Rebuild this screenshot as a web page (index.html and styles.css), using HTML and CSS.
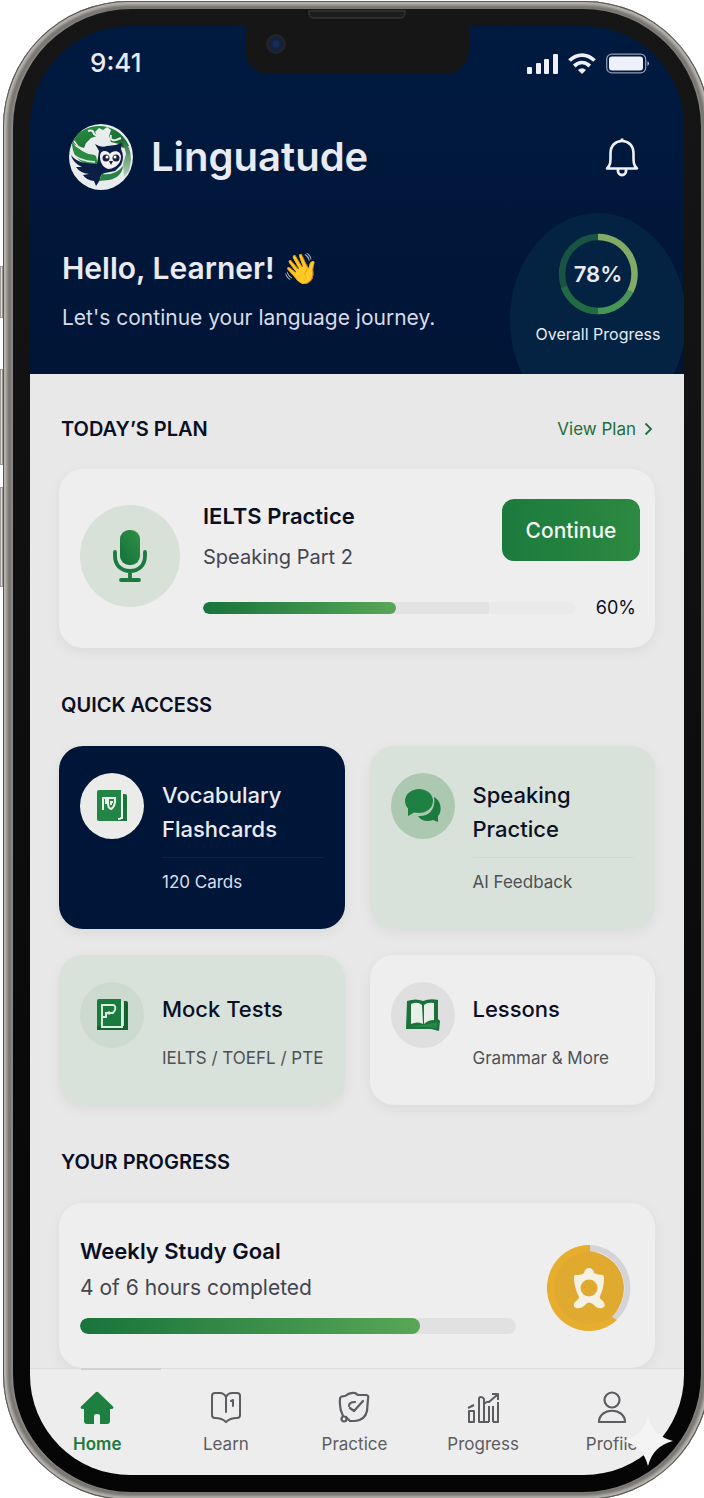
FILE: index.html
```html
<!DOCTYPE html>
<html lang="en">
<head>
  <meta charset="UTF-8" />
  <meta name="viewport" content="width=device-width, initial-scale=1.0"/>
  <title>Linguatude</title>
  <link rel="stylesheet" href="styles.css">
</head>
<body>

  <div class="phone">
    <span class="side-button mute"></span>
    <span class="side-button volume-up"></span>
    <span class="side-button volume-down"></span>
    <div class="bezel">
      <span class="speaker"></span>
      <div class="screen">
        <div class="notch"><span class="camera"></span></div>

        <header class="header">
          <div class="status-bar">
            <span class="time">9:41</span>
            <div class="status-icons">
              <svg width="31" height="21" viewBox="0 0 31 21" fill="#eef0fa">
                <rect x="0" y="14" width="5" height="7" rx="1"/>
                <rect x="9" y="10" width="5" height="11" rx="1"/>
                <rect x="17" y="6" width="5" height="15" rx="1"/>
                <rect x="26" y="1" width="5" height="20" rx="1"/>
              </svg>
              <svg width="28" height="21" viewBox="0 0 28 21" fill="none" stroke="#eef0fa" stroke-width="3.8">
                <path d="M1.5 7.5C9 .2 19 .2 26.5 7.5"/>
                <path d="M6.2 13C11 8.500 17 8.500 21.800 13"/>
                <path d="M14 21L10 17Q14 13.500 18 17Z" fill="#eef0fa" stroke="none"/>
              </svg>
              <svg width="44" height="21" viewBox="0 0 44 21">
                <rect x=".7" y="1.200" width="39" height="18.600" rx="5" fill="none" stroke="#8f9bb5" stroke-width="1.300"/>
                <rect x="3" y="3.500" width="34" height="14" rx="3" fill="#eef0fa"/>
                <path d="M41.500 8q3 2.500 0 5z" fill="#b6bfd2"/>
              </svg>
            </div>
          </div>

          <div class="brand-row">
            <svg class="logo" viewBox="0 0 64 66">
              <defs>
                <linearGradient id="globe" x1="0" y1="0" x2="1" y2="1">
                  <stop offset="0" stop-color="#2c9142"/>
                  <stop offset="1" stop-color="#14602f"/>
                </linearGradient>
                <linearGradient id="rim" x1="0" y1="0" x2="0" y2="1">
                  <stop offset="0" stop-color="#1d6b36"/>
                  <stop offset="1" stop-color="#b9d3bd"/>
                </linearGradient>
                <clipPath id="globeClip"><ellipse cx="32" cy="33" rx="32" ry="33"/></clipPath>
              </defs>
              <g clip-path="url(#globeClip)">
                <rect width="64" height="66" fill="#e9ecec"/>
                <path d="M3 18C12-2 48-6 60 22L54 24 50 20 42 18 40 12 42 6 38 3 34 6 30 4 26 8 28 12 22 14 17 19 15 24 6 21z" fill="url(#globe)"/>
                <path d="M42 11q-2 6 5 5l5-2" fill="none" stroke="#e9ecec" stroke-width="2"/>
                <path d="M19 7q5-2 6 3l5 3" fill="none" stroke="#e9ecec" stroke-width="2"/>
                <path d="M53 14Q62 22 62 36L60 47 55 53 54 40 57 30z" fill="url(#rim)"/>
                <path d="M3 18C9 28 19 26 27 32L29 40C14 42 3 35 3 18z" fill="#2b8c41"/>
                <path d="M5 17Q12 29 25 30M1 28Q9 37 26 38" stroke="#e9ecec" stroke-width="1.500" fill="none"/>
                <path d="M2 31C9 40 18 39 28 40L30 27 26 20Q32 24 38 22 46 22 53 19L52 25Q56 33 52 41L46 47 36 49Q31 50 31 56L27 62 25 57Q17 56 14 51L20 50Q11 49 7 43L13 43Q4 39 2 31z" fill="#0b1e45"/>
                <path d="M33 50Q46 52 54 42 53 53 40 56L30 57z" fill="#2a8344"/>
                <path d="M31 33c0-9 9-6 10-3 2-4 11-4 11 3 0 9-10 12-12 12-4 0-9-5-9-12z" fill="#f4f2f2"/>
                <circle cx="37" cy="34" r="3.500" fill="#17213f"/><circle cx="47" cy="34" r="3.500" fill="#17213f"/>
                <circle cx="38" cy="33" r="1.500" fill="#fff"/><circle cx="46" cy="33" r="1.500" fill="#fff"/>
                <path d="M40 37h4l-2 4z" fill="#17213f"/>
              </g>
            </svg>
            <h1>Linguatude</h1>
            <button class="bell" aria-label="Notifications">
              <svg width="34" height="40" viewBox="0 0 34 40" fill="none" stroke="#f0f1f8" stroke-width="2.600" stroke-linejoin="round">
                <path d="M2 31.500C6 28 5.500 24 5.500 16.500 5.500 8.500 10.500 4 17 4S28.500 8.500 28.500 16.500C28.500 24 28 28 32 31.500Z"/>
                <path d="M17 4V1.500M13 32v2a4 4 0 0 0 8 0v-2" stroke-width="2.800"/>
              </svg>
            </button>
          </div>

          <div class="hero">
            <div class="greeting">
              <h2>Hello, Learner! <span class="wave">👋</span></h2>
              <p>Let's continue your language journey.</p>
            </div>
            <div class="overall">
              <div class="ring">
                <svg width="80" height="82" viewBox="0 0 80 82" fill="none" stroke-width="6.500">
                  <path d="M40 4A36 37 0 0 0 40 78" stroke="#195344"/>
                  <path d="M6 54A36 37 0 0 0 40 78" stroke="#216a42"/>
                  <path d="M40 78A36 37 0 0 0 73 57" stroke="#489657"/>
                  <path d="M40 4A36 37 0 0 1 72.500 58" stroke="#83ab65"/>
                </svg>
                <strong>78%</strong>
              </div>
              <span>Overall Progress</span>
            </div>
          </div>
        </header>

        <main class="content">
          <div class="section-head first">
            <h3>TODAY’S PLAN</h3>
            <a href="#plan">View Plan
              <svg width="9" height="14" viewBox="0 0 9 14" fill="none" stroke="#1f6e3b" stroke-width="1.800"><path d="M1.500 1.500L7 7l-5.500 5.500"/></svg>
            </a>
          </div>

          <section class="card plan-card" id="plan">
            <div class="plan-icon">
              <svg width="36" height="54" viewBox="0 0 36 54">
                <defs>
                  <linearGradient id="mic" x1="0" y1="1" x2="1" y2="0">
                    <stop offset="0" stop-color="#14703a"/>
                    <stop offset="1" stop-color="#2f9145"/>
                  </linearGradient>
                </defs>
                <rect x="8" y="1" width="20" height="35" rx="9" fill="url(#mic)"/>
                <path d="M3 23v4c0 9 6 15 15 15s15-6 15-15v-4M18 42v9M9 51h18" fill="none" stroke="#1c7a40" stroke-width="3.800" stroke-linecap="round"/>
              </svg>
            </div>
            <div class="plan-body">
              <div class="plan-top">
                <div>
                  <h4>IELTS Practice</h4>
                  <p>Speaking Part 2</p>
                </div>
                <button class="continue">Continue</button>
              </div>
              <div class="plan-progress">
                <div class="bar bar-fade"><div class="bar-fill" style="width: 52%"></div></div>
                <span>60%</span>
              </div>
            </div>
          </section>

          <div class="section-head">
            <h3>QUICK ACCESS</h3>
          </div>

          <div class="grid">
            <a href="#vocabulary" class="card tile navy">
              <span class="tile-icon">
                <svg width="30" height="32" viewBox="0 0 30 32">
                  <path d="M2 0H24V31H2Q0 31 0 29V2Q0 0 2 0z" fill="#238545"/>
                  <path d="M26 4h2q2 0 2 2v25H20V29h6z" fill="#1b743c"/>
                  <path d="M25 3V26Q25 29 21 29" fill="none" stroke="#eef3ee" stroke-width="1.800"/>
                  <path d="M6 20V8H9V14M10 8H18V12Q17 18 14 19 11 18 11 13V8M14 15V12H16" fill="none" stroke="#e9f3e9" stroke-width="2"/>
                </svg>
              </span>
              <span class="tile-text">
                <strong>Vocabulary Flashcards</strong>
                <small class="ruled">120 Cards</small>
              </span>
            </a>

            <a href="#speaking" class="card tile mint">
              <span class="tile-icon">
                <svg width="36" height="34" viewBox="0 0 36 34">
                  <path d="M29 8C37 12 37 23 33 27L33 33 28 31C22 33 16 32 13 27 24 28 31 20 29 8z" fill="#1b7b3f"/>
                  <ellipse cx="14" cy="12" rx="14" ry="12" fill="#1e8143"/>
                  <path d="M3 18L3 27 10 23z" fill="#1e8143"/>
                </svg>
              </span>
              <span class="tile-text">
                <strong>Speaking Practice</strong>
                <small class="ruled">AI Feedback</small>
              </span>
            </a>

            <a href="#tests" class="card tile mint short">
              <span class="tile-icon">
                <svg width="31" height="32" viewBox="0 0 31 32">
                  <path d="M2 0H24V31H2Q0 31 0 29V2Q0 0 2 0z" fill="#1b7a3e"/>
                  <path d="M27 2h2q2 0 2 2v27H0V27H27z" fill="#126332"/>
                  <path d="M25 3V28H5V6H16Q19 6 18 11L16 14H9V18H5" fill="none" stroke="#dceee0" stroke-width="1.900"/>
                  <circle cx="12" cy="14" r="1.700" fill="#dceee0"/>
                </svg>
              </span>
              <span class="tile-text">
                <strong>Mock Tests</strong>
                <small>IELTS / TOEFL / PTE</small>
              </span>
            </a>

            <a href="#lessons" class="card tile plain short">
              <span class="tile-icon">
                <svg width="34" height="33" viewBox="0 0 34 33">
                  <path d="M1 2Q10-1 17 2 24-1 32 1L32 20 34 22 33 32 25 30H0z" fill="#1a7139"/>
                  <path d="M5 5Q12 2 16 6L17 25Q12 22 5 25z" fill="#e8eee8"/>
                  <path d="M28 4Q21 3 18 6L18 25Q22 21 28 21z" fill="#e8eee8"/>
                  <path d="M3 28L17 26 31 23 31 29 18 28z" fill="#24884a"/>
                </svg>
              </span>
              <span class="tile-text">
                <strong>Lessons</strong>
                <small>Grammar &amp; More</small>
              </span>
            </a>
          </div>

          <div class="section-head">
            <h3>YOUR PROGRESS</h3>
          </div>

          <section class="card goal-card">
            <div class="goal-body">
              <h4>Weekly Study Goal</h4>
              <p>4 of 6 hours completed</p>
              <div class="bar bar-thick"><div class="bar-fill" style="width: 78%"></div></div>
            </div>
            <svg class="medal" width="84" height="88" viewBox="0 0 84 88">
              <path d="M43 4A39 40 0 0 1 66 75" fill="none" stroke="#d3d3d8" stroke-width="6"/>
              <path d="M43 1A42 43 0 1 0 70 76L65 73A38 39 0 0 0 43 7z" fill="#e6ad2e"/>
              <ellipse cx="42" cy="44" rx="35" ry="36" fill="#e0aa30"/>
              <path d="M37 29Q38 24 42 24T47 29Q51 31 55 31 57 31 57 34 57 44 53 52 52 55 56 57 60 63 55 64 51 65 48 62 42 55 37 62 34 65 29 64 25 62 28 58 34 54 31 51 27 42 27 33 27 30 31 31 35 31 37 29z" fill="#f5f1e4"/>
              <circle cx="42" cy="44" r="8.500" fill="#e0aa30"/>
            </svg>
          </section>
        </main>

        <nav class="tab-bar">
          <a href="#home" class="tab active">
            <svg width="34" height="34" viewBox="0 0 34 34" fill="#1e8040">
              <path d="M15.500 1.500Q17 0 18.500 1.500L33 15.500Q34.500 18 31 18H30V30Q30 33 27 33H20V25Q20 23 17 23T14 25V33H7Q4 33 4 30V18H3Q-.5 18 1 15.500z"/>
            </svg>
            Home
          </a>
          <a href="#learn" class="tab">
            <svg width="34" height="34" viewBox="0 0 34 34" fill="none" stroke="#5c5c61" stroke-width="2" stroke-linejoin="round" stroke-linecap="round">
              <path d="M17 21V6Q15 2 11 2H6Q3 2 3 5V24Q3 27 6 27 13 27 17 31 21 27 28 27 31 27 31 24V5Q31 2 28 2H23Q19 2 17 6"/>
              <path d="M22 10l2-1v6"/>
            </svg>
            Learn
          </a>
          <a href="#practice" class="tab">
            <svg width="34" height="34" viewBox="0 0 34 34" fill="none" stroke="#5c5c61" stroke-width="2.200" stroke-linejoin="round" stroke-linecap="round">
              <path d="M6 25Q2 17 3 8 3 5 8 5 13 1 18 2L21 4 29 4Q32 4 31 8L30 20Q28 29 18 30H13"/>
              <path d="M18 11Q12 11 12 15M13 17l4 3 9-10"/>
              <circle cx="7" cy="28" r="2.500"/>
              <path d="M9 26l4 4"/>
            </svg>
            Practice
          </a>
          <a href="#progress" class="tab">
            <svg width="34" height="34" viewBox="0 0 34 34" fill="none" stroke="#5c5c61" stroke-width="2" stroke-linejoin="round">
              <path d="M3 20H8V31H3zM13 31V8Q13 6 15 6T18 8V31zM23 15V31M27 31V15M32 11V31H27M13 31H23M2 17L8 14M18 13Q21 10 23 11L31 4M26 3H32V9"/>
            </svg>
            Progress
          </a>
          <a href="#profile" class="tab">
            <svg width="34" height="34" viewBox="0 0 34 34" fill="none" stroke="#5c5c61" stroke-width="2.200" stroke-linejoin="round">
              <circle cx="17" cy="9" r="7.500"/>
              <path d="M4 31C4 16 30 16 30 31z"/>
            </svg>
            Profile
          </a>
        </nav>
      </div>
    </div>
    <svg class="sparkle" width="50" height="50" viewBox="0 0 50 50"><path d="M25 0Q30 20 50 25 30 30 25 50 20 30 0 25 20 20 25 0z" fill="#f4f4f4"/></svg>
  </div>

</body>
</html>
```

FILE: styles.css
```css
* {
  box-sizing: border-box;
}
body {
  margin: 0;
  background: #fff;
  font-family: Inter, 'Liberation Sans', sans-serif;
  color: #0b0f24;
  overflow-x: hidden;
}
h1, h2, h3, h4, p {
  margin: 0;
}
a {
  text-decoration: none;
  color: inherit;
}

/* Phone frame */
.phone {
  position: relative;
  margin: 1px -6px 0 3px;
  padding: 8px 9px 8px 10px;
  border-radius: 126px;
  background: #8d8a85;
  box-shadow: inset 0 0 0 1px #55534f, inset 0 0 3px 4px #bab7b1, inset 0 0 2px 8px #75736f;
}
.bezel {
  position: relative;
  padding: 17px;
  border-radius: 118px;
  background: linear-gradient(#161616, #050505);
}
.speaker {
  position: absolute;
  top: 1px;
  left: 50%;
  width: 98px;
  height: 9px;
  transform: translateX(-50%);
  border: 2px solid #2d2d2d;
  border-radius: 0 0 6px 6px;
  background: #1d1d1d;
}
.side-button {
  position: absolute;
  left: -3px;
  width: 3px;
  border: 1px solid #9a9792;
  background: #e2e0dc;
}
.mute {
  top: 265px;
  height: 52px;
}
.volume-up {
  top: 368px;
  height: 96px;
}
.volume-down {
  top: 486px;
  height: 100px;
}
.screen {
  position: relative;
  overflow: hidden;
  border-radius: 100px;
}
.notch {
  position: absolute;
  top: 0;
  left: 50%;
  width: 224px;
  height: 48px;
  transform: translateX(-50%);
  border-radius: 0 0 24px 24px;
  background: #161616;
}
.camera {
  position: absolute;
  top: 8px;
  left: 21px;
  width: 20px;
  height: 20px;
  border-radius: 50%;
  background: radial-gradient(circle, #182d59 15%, #14203b 35%, #20242c 60%);
}

/* Header */
.header {
  overflow: hidden;
  background: linear-gradient(#001a40, #001536);
  color: #e9eaf2;
}
.status-bar {
  display: flex;
  justify-content: space-between;
  align-items: center;
  padding: 21px 34px 0 60px;
}
.time {
  font-size: 26px;
  line-height: 32px;
  font-weight: 500;
}
.status-icons {
  display: flex;
  gap: 10px;
}
.brand-row {
  display: flex;
  align-items: center;
  padding: 45px 45px 0 39px;
}
.logo {
  width: 64px;
  height: 66px;
}
.brand-row h1 {
  margin-left: 18px;
  font-size: 40px;
  line-height: 48px;
  font-weight: 600;
}
.bell {
  margin-left: auto;
  padding: 0;
  border: none;
  background: none;
  cursor: pointer;
}
.bell svg {
  display: block;
}
.hero {
  display: flex;
  justify-content: space-between;
  height: 184px;
  padding: 23px 0 0 32px;
}
.greeting {
  padding-top: 37px;
}
.greeting h2 {
  font-size: 30px;
  line-height: 36px;
  font-weight: 600;
}
.greeting p {
  margin-top: 17px;
  font-size: 21px;
  line-height: 30px;
  color: #d8dbe8;
}
.overall {
  display: flex;
  flex-direction: column;
  align-items: center;
  flex: none;
  width: 176px;
  height: 214px;
  margin-right: -2px;
  padding-top: 20px;
  border-radius: 50%;
  background: #042342;
  font-size: 16px;
  line-height: 24px;
}
.ring {
  display: grid;
  place-items: center;
  margin-bottom: 7px;
}
.ring svg, .ring strong {
  grid-area: 1 / 1;
}
.ring strong {
  font-size: 22px;
  font-weight: 600;
}

/* Content */
.content {
  padding: 0 29px;
  background: #e8e8e8;
}
.section-head {
  display: flex;
  justify-content: space-between;
  align-items: center;
  padding: 43px 2px 27px 2px;
}
.section-head.first {
  padding: 41px 2px 26px 2px;
}
.section-head h3 {
  font-size: 20px;
  line-height: 28px;
  font-weight: 600;
}
.section-head a {
  display: flex;
  align-items: center;
  gap: 8px;
  font-size: 17px;
  color: #1f6e3b;
}
.card {
  border-radius: 24px;
  background: #eeeeee;
  box-shadow: 0 4px 14px rgba(0,0,0,0.06);
}
.card h4 {
  font-size: 22px;
  line-height: 34px;
  font-weight: 600;
}
.card p {
  font-size: 20px;
  line-height: 28px;
  color: #44454f;
}
.plan-card {
  display: flex;
  gap: 23px;
  padding: 30px 15px 26px 21px;
}
.plan-icon {
  display: flex;
  align-items: center;
  justify-content: center;
  flex: none;
  width: 100px;
  height: 102px;
  margin-top: 6px;
  border-radius: 50%;
  background: #d7e1d8;
}
.plan-body {
  flex: 1;
}
.plan-top {
  display: flex;
  justify-content: space-between;
}
.plan-top p {
  margin-top: 10px;
}
.continue {
  width: 138px;
  height: 62px;
  border: none;
  border-radius: 12px;
  background: linear-gradient(to right, #1c7a3e, #2c8a41);
  color: #f2f6f2;
  font-family: inherit;
  font-size: 21px;
  font-weight: 500;
  cursor: pointer;
}
.plan-progress {
  display: flex;
  align-items: center;
  gap: 21px;
  margin-top: 23px;
  padding-right: 4px;
  font-size: 18px;
  line-height: 28px;
}
.bar {
  flex: 1;
  height: 12px;
  border-radius: 8px;
  background: #e1e1e1;
  overflow: hidden;
}
.bar-fade {
  background: linear-gradient(to right, #e3e3e3 77%, #eaeaea 77%);
}
.bar-thick {
  height: 16px;
}
.bar-fill {
  height: 100%;
  border-radius: 8px;
  background: linear-gradient(to right, #17743c, #59a656);
}

/* Quick access */
.grid {
  display: grid;
  grid-template-columns: 1fr 1fr;
  gap: 26px 25px;
}
.tile {
  display: flex;
  gap: 18px;
  padding: 27px 21px 35px 21px;
}
.tile-icon {
  display: flex;
  align-items: center;
  justify-content: center;
  flex: none;
  width: 64px;
  height: 66px;
  border-radius: 50%;
}
.tile-text {
  flex: 1;
  padding-top: 5px;
}
.tile-text strong {
  display: block;
  font-size: 22px;
  line-height: 34px;
  font-weight: 500;
}
.tile-text small {
  display: block;
  margin-top: 20px;
  font-size: 17px;
  line-height: 24px;
  white-space: nowrap;
  color: #4c5155;
}
.tile-text .ruled {
  margin-top: 11px;
  padding-top: 12px;
  border-top: 1px solid #d0dad1;
}
.short .tile-text {
  padding-top: 10px;
}
.navy {
  background: #001638;
  color: #e9eaf2;
}
.navy .tile-icon {
  background: #ebebe9;
}
.navy .tile-text .ruled {
  color: #dcdfea;
  border-color: #0c2244;
}
.mint {
  background: #d9e2da;
}
.mint .tile-icon {
  background: #adc8b0;
}
.mint.short .tile-icon {
  background: #cddacf;
}
.plain .tile-icon {
  background: #e0dfe0;
}

/* Weekly goal */
.goal-card {
  display: flex;
  align-items: center;
  gap: 31px;
  padding: 31px 24px 34px 21px;
}
.goal-body {
  flex: 1;
}
.goal-card p {
  margin: 6px 0 16px;
  font-size: 21px;
}
.medal {
  flex: none;
  margin-top: 8px;
}

/* Bottom navigation */
.tab-bar {
  position: relative;
  display: flex;
  padding: 22px 8px 19px 3px;
  border-top: 1px solid #dcdcdc;
  background: #ededed;
}
.tab {
  flex: 1;
  display: flex;
  flex-direction: column;
  align-items: center;
  gap: 7px;
  font-size: 17px;
  line-height: 24px;
  color: #5c5c61;
}
.tab.active {
  color: #1e7a3e;
  font-weight: 600;
}
.tab.active::before {
  content: "";
  position: absolute;
  top: -1px;
  left: 51px;
  width: 80px;
  height: 2px;
  background: #d0d0d2;
}
.sparkle {
  position: absolute;
  right: 37px;
  bottom: 34px;
}
```
